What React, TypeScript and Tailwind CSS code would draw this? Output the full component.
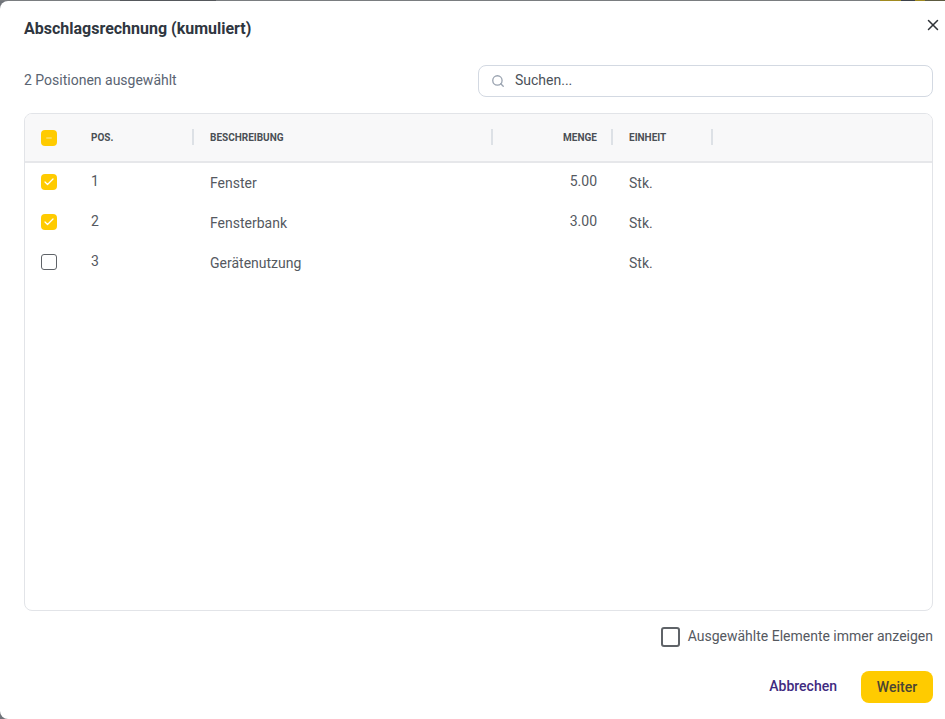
import { X, Search, Check, Minus } from "lucide-react";

const font = { fontFamily: "Roboto, sans-serif" };

function Cb({ state }: { state: "on" | "off" | "mixed" }) {
  if (state === "off")
    return <span className="block w-4 h-4 rounded-[3px] border border-[#5f6368] bg-white" />;
  return (
    <span className="flex w-4 h-4 rounded-[4px] bg-[#ffcb00] items-center justify-center">
      {state === "on" ? (
        <Check className="w-3 h-3 text-white" strokeWidth={2.5} />
      ) : (
        <Minus className="w-2 h-2 text-[#f9e9a0]" strokeWidth={3} />
      )}
    </span>
  );
}

function Sep() {
  return <span className="absolute right-0 top-[15px] h-4 w-0.5 bg-[#dde1e6]" />;
}

const rows = [
  { s: "on" as const, p: "1", d: "Fenster", m: "5.00", e: "Stk." },
  { s: "on" as const, p: "2", d: "Fensterbank", m: "3.00", e: "Stk." },
  { s: "off" as const, p: "3", d: "Gerätenutzung", m: "", e: "Stk." },
];

export default function App() {
  return (
    <div className="w-[945px] h-[719px] bg-[#70747a] overflow-hidden" style={font}>
      <div className="h-px bg-[#7a7d80] flex">
        <span className="w-[120px]" />
        <span className="w-[96px] bg-[#55585c]" />
        <span className="w-[664px]" />
        <span className="w-[21px] bg-[#a08a20]" />
        <span className="w-[14px] bg-[#3c4148]" />
        <span className="w-[10px] bg-[#a08a20]" />
        <span className="w-[20px] bg-[#5c5a40]" />
      </div>
      <div className="relative h-[718px] bg-white rounded-tl-[8px] rounded-bl-[8px] pl-6 pr-3 flex flex-col">
        <button className="absolute right-[3px] top-[15px] text-[#2f3338]">
          <X className="w-[18px] h-[18px]" strokeWidth={2} />
        </button>
        <h1 className="mt-[17px] h-[21px] leading-[21px] text-[16px] font-bold text-[#2f3640]">
          Abschlagsrechnung (kumuliert)
        </h1>
        <div className="mt-[26px] flex items-center justify-between w-full">
          <span className="text-[14px] text-[#5a6472] -mt-0.5">2 Positionen ausgewählt</span>
          <div className="w-[455px] h-8 rounded-lg border border-[#d3d9e2] flex items-center pl-3">
            <Search className="w-[14px] h-[14px] text-[#9aa3b0] mr-[10px]" strokeWidth={2.25} />
            <span className="text-[14px] text-[#4b5159] -mt-0.5">Suchen...</span>
          </div>
        </div>
        <div className="mt-4 h-[498px] rounded-lg border border-[#e2e4e8] overflow-hidden">
          <div className="flex h-[49px] bg-[#f8f8f9] border-b-2 border-[#e6e7ea] text-[10px] font-bold text-[#4a4f55] items-center">
            <div className="relative w-[169px] h-full flex items-center">
              <span className="ml-4 mr-[34px]"><Cb state="mixed" /></span>
              <span>POS.</span>
              <Sep />
            </div>
            <div className="relative w-[299px] h-full flex items-center pl-[16px]">
              BESCHREIBUNG
              <Sep />
            </div>
            <div className="relative w-[120px] h-full flex items-center justify-end pr-[16px]">
              MENGE
              <Sep />
            </div>
            <div className="relative w-[100px] h-full flex items-center pl-[16px]">
              EINHEIT
              <Sep />
            </div>
          </div>
          <div className="-mt-px">
            {rows.map((r) => (
              <div key={r.p} className="flex h-10 items-center text-[14px] text-[#55595f]">
                <div className="w-[169px] flex items-center">
                  <span className="ml-4 mr-[34px]"><Cb state={r.s} /></span>
                  <span className="-mt-0.5">{r.p}</span>
                </div>
                <div className="w-[299px] pl-[16px] mt-0.5">{r.d}</div>
                <div className="w-[120px] text-right pr-[16px] -mt-0.5">{r.m}</div>
                <div className="w-[100px] pl-[16px] mt-0.5">{r.e}</div>
              </div>
            ))}
          </div>
        </div>
        <div className="mt-4 flex items-center justify-end gap-2">
          <span className="block w-[19px] h-5 rounded-[3px] border-2 border-[#5f6368]" />
          <span className="text-[14px] text-[#55595f] -mt-0.5">Ausgewählte Elemente immer anzeigen</span>
        </div>
        <div className="mt-6 flex items-center justify-end">
          <button className="text-[14px] font-medium text-[#3f2b80] mr-6 -mt-0.5">Abbrechen</button>
          <button className="w-[72px] h-8 rounded-lg bg-[#ffcb00] text-[14px] font-medium text-[#4a4433]">Weiter</button>
        </div>
      </div>
    </div>
  );
}
